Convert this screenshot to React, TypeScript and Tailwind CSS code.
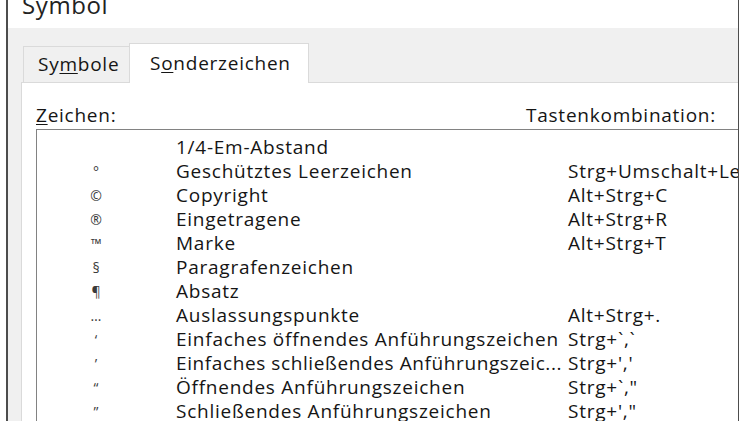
import React from 'react';

type Row = { sym: string; name: string; keys: string; tight?: boolean };

const rows: Row[] = [
  { sym: '', name: '1/4-Em-Abstand', keys: '' },
  { sym: '°', name: 'Geschütztes Leerzeichen', keys: 'Strg+Umschalt+Leertaste' },
  { sym: '©', name: 'Copyright', keys: 'Alt+Strg+C' },
  { sym: '®', name: 'Eingetragene', keys: 'Alt+Strg+R' },
  { sym: '™', name: 'Marke', keys: 'Alt+Strg+T' },
  { sym: '§', name: 'Paragrafenzeichen', keys: '' },
  { sym: '¶', name: 'Absatz', keys: '' },
  { sym: '…', name: 'Auslassungspunkte', keys: 'Alt+Strg+.' },
  { sym: '‘', name: 'Einfaches öffnendes Anführungszeichen', keys: "Strg+`,`" },
  { sym: '’', name: 'Einfaches schließendes Anführungszeic...', keys: "Strg+','", tight: true },
  { sym: '“', name: 'Öffnendes Anführungszeichen', keys: 'Strg+`,"' },
  { sym: '”', name: 'Schließendes Anführungszeichen', keys: "Strg+'," + '"' },
];

export default function App() {
  return (
    <div
      className="w-[750px] h-[421px] overflow-hidden bg-white text-[#151515]"
      style={{ fontFamily: '"Open Sans", "Noto Sans", sans-serif' }}
    >
      <div className="ml-[6px] w-[733px] h-[421px] border-l-2 border-r border-[#4d4d4d] flex flex-col">
        {/* Title bar, cut off at the top */}
        <div className="h-[28px] bg-white pl-[14px] overflow-hidden">
          <div className="text-[24px] leading-[24px] -mt-[7px] tracking-[0.6px] text-[#222]">Symbol</div>
        </div>

        {/* Dialog body */}
        <div className="flex-1 bg-[#f0f0f0] pl-[13px] pt-[14px] flex flex-col min-h-0 text-[19px] tracking-[0.75px]">
          {/* Tabs */}
          <div className="flex items-end h-[40px] pl-[2px]">
            <div className="h-[36px] w-[106px] border-t border-l border-[#dadada] bg-[#f0f0f0] flex items-center pl-[14px]">
              Sy<span className="underline underline-offset-2">m</span>bole
            </div>
            <div className="h-[40px] w-[180px] border-t border-l border-r border-[#dadada] bg-white flex items-center pl-[20px] -mb-px relative z-10">
              S<span className="underline underline-offset-2">o</span>nderzeichen
            </div>
          </div>

          {/* Panel */}
          <div className="flex-1 bg-white border-t border-l border-[#dadada] pl-[14px] pt-[20px] overflow-hidden flex flex-col min-h-0">
            <div className="flex items-center justify-between h-[24px] pr-[22px]">
              <span>
                <span className="underline underline-offset-2">Z</span>eichen:
              </span>
              <span>Tastenkombination:</span>
            </div>

            <div className="mt-[2px] flex-1 w-[800px] border-t border-l border-[#828282] pt-[5px]">
              {rows.map((r) => (
                <div key={r.name} className="flex items-center h-[24px] whitespace-nowrap">
                  <div className="w-[118px] shrink-0 text-center text-[14px] tracking-normal text-[#3a3a3a]">{r.sym}</div>
                  <div className={r.tight ? 'w-[413px] shrink-0 pl-[21px] tracking-[0.6px]' : 'w-[413px] shrink-0 pl-[21px]'}>
                    {r.name}
                  </div>
                  <div className="shrink-0">{r.keys}</div>
                </div>
              ))}
            </div>
          </div>
        </div>
      </div>
    </div>
  );
}
